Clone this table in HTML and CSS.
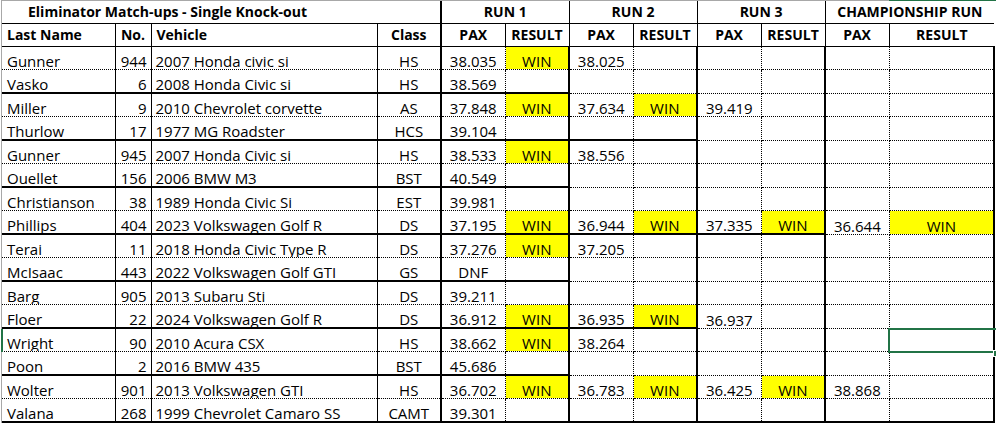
FILE: index.html
```html
<!DOCTYPE html>
<html lang="en">
<head>
<meta charset="utf-8">
<title>Eliminator Match-ups</title>
<link rel="stylesheet" href="styles.css">
</head>
<body>
<div class="sheet">
  <div class="frame">
    <table class="grid">
      <colgroup>
        <col class="w-name"><col class="w-no"><col class="w-veh"><col class="w-std">
        <col class="w-std"><col class="w-std"><col class="w-std"><col class="w-std">
        <col class="w-std"><col class="w-std"><col class="w-std"><col class="w-last">
      </colgroup>
      <tr class="h1">
        <td colspan="4" class="title">Eliminator Match-ups - Single Knock-out</td>
        <td colspan="2" class="run">RUN 1</td>
        <td colspan="2" class="run">RUN 2</td>
        <td colspan="2" class="run">RUN 3</td>
        <td colspan="2" class="run end">CHAMPIONSHIP RUN</td>
      </tr>
      <tr class="h2">
        <td class="left">Last Name</td><td>No.</td><td class="left">Vehicle</td><td>Class</td>
        <td>PAX</td><td>RESULT</td><td>PAX</td><td>RESULT</td><td>PAX</td><td>RESULT</td><td>PAX</td><td>RESULT</td>
      </tr>
      <tr class="d">
        <td>Gunner</td><td>944</td><td>2007 Honda civic si</td><td>HS</td><td>38.035</td><td class="win">WIN</td><td>38.025</td><td></td><td></td><td></td><td></td><td></td>
      </tr>
      <tr class="d p2">
        <td>Vasko</td><td>6</td><td>2008 Honda Civic si</td><td>HS</td><td>38.569</td><td></td><td></td><td></td><td></td><td></td><td></td><td></td>
      </tr>
      <tr class="d">
        <td>Miller</td><td>9</td><td>2010 Chevrolet corvette</td><td>AS</td><td>37.848</td><td class="win">WIN</td><td>37.634</td><td class="win">WIN</td><td>39.419</td><td></td><td></td><td></td>
      </tr>
      <tr class="d p4">
        <td>Thurlow</td><td>17</td><td>1977 MG Roadster</td><td>HCS</td><td>39.104</td><td></td><td></td><td></td><td></td><td></td><td></td><td></td>
      </tr>
      <tr class="d">
        <td>Gunner</td><td>945</td><td>2007 Honda Civic si</td><td>HS</td><td>38.533</td><td class="win">WIN</td><td>38.556</td><td></td><td></td><td></td><td></td><td></td>
      </tr>
      <tr class="d p2">
        <td>Ouellet</td><td>156</td><td>2006 BMW M3</td><td>BST</td><td>40.549</td><td></td><td></td><td></td><td></td><td></td><td></td><td></td>
      </tr>
      <tr class="d">
        <td>Christianson</td><td>38</td><td>1989 Honda Civic Si</td><td>EST</td><td>39.981</td><td></td><td></td><td></td><td></td><td></td><td></td><td></td>
      </tr>
      <tr class="d p8">
        <td>Phillips</td><td>404</td><td>2023 Volkswagen Golf R</td><td>DS</td><td>37.195</td><td class="win">WIN</td><td>36.944</td><td class="win">WIN</td><td>37.335</td><td class="win">WIN</td><td>36.644</td><td class="win">WIN</td>
      </tr>
      <tr class="d">
        <td>Terai</td><td>11</td><td>2018 Honda Civic Type R</td><td>DS</td><td>37.276</td><td class="win">WIN</td><td>37.205</td><td></td><td></td><td></td><td></td><td></td>
      </tr>
      <tr class="d p2">
        <td>McIsaac</td><td>443</td><td>2022 Volkswagen Golf GTI</td><td>GS</td><td>DNF</td><td></td><td></td><td></td><td></td><td></td><td></td><td></td>
      </tr>
      <tr class="d">
        <td>Barg</td><td>905</td><td>2013 Subaru Sti</td><td>DS</td><td>39.211</td><td></td><td></td><td></td><td></td><td></td><td></td><td></td>
      </tr>
      <tr class="d p4">
        <td>Floer</td><td>22</td><td>2024 Volkswagen Golf R</td><td>DS</td><td>36.912</td><td class="win">WIN</td><td>36.935</td><td class="win">WIN</td><td>36.937</td><td></td><td></td><td></td>
      </tr>
      <tr class="d">
        <td>Wright</td><td>90</td><td>2010 Acura CSX</td><td>HS</td><td>38.662</td><td class="win">WIN</td><td>38.264</td><td></td><td></td><td></td><td></td><td></td>
      </tr>
      <tr class="d p2">
        <td>Poon</td><td>2</td><td>2016 BMW 435</td><td>BST</td><td>45.686</td><td></td><td></td><td></td><td></td><td></td><td></td><td></td>
      </tr>
      <tr class="d">
        <td>Wolter</td><td>901</td><td>2013 Volkswagen GTI</td><td>HS</td><td>36.702</td><td class="win">WIN</td><td>36.783</td><td class="win">WIN</td><td>36.425</td><td class="win">WIN</td><td>38.868</td><td></td>
      </tr>
      <tr class="d p16">
        <td>Valana</td><td>268</td><td>1999 Chevrolet Camaro SS</td><td>CAMT</td><td>39.301</td><td></td><td></td><td></td><td></td><td></td><td></td><td></td>
      </tr>
    </table>
  </div>
  <div class="col-sel"></div>
  <div class="row-sel"></div>
  <div class="cell-sel"><span class="handle"></span></div>
</div>
</body>
</html>
```

FILE: styles.css
```css
html, body {
  margin: 0;
  padding: 0;
  background: #ffffff;
}

body {
  font-family: "Open Sans", "Liberation Sans", sans-serif;
  font-size: 15px;
  color: #000000;
}

.sheet {
  position: relative;
  width: 996px;
  height: 423px;
  overflow: hidden;
}

.frame {
  margin-left: 1px;
  border-left: 1px solid #a8a8a8;
  border-top: 1px solid #a8a8a8;
}

.grid {
  border-collapse: collapse;
  table-layout: fixed;
  width: 993px;
}

.w-name { width: 113px; }
.w-no { width: 36px; }
.w-veh { width: 226px; }
.w-std { width: 64px; }
.w-last { width: 105px; }

.grid td {
  padding: 0 4px;
  border: 0;
  white-space: nowrap;
  overflow: hidden;
  line-height: 18px;
  vertical-align: bottom;
  text-align: center;
}

/* header row 1 */
.h1 td {
  height: 20px;
  padding-bottom: 2px;
  font-size: 14px;
  font-weight: 700;
  border-bottom: 1px solid #000;
}
.h1 .title {
  text-align: left;
  padding-left: 26px;
  border-right: 2px solid #000;
}
.h1 .run {
  border-right: 1px solid #000;
}
.h1 .end {
  border-right: 0;
}

/* header row 2 */
.h2 td {
  height: 20px;
  padding-bottom: 2px;
  font-size: 14px;
  font-weight: 700;
  border-bottom: 1px solid #000;
  border-right: 1px solid #000;
}
.h2 td.left {
  text-align: left;
  padding-left: 5px;
}
.h2 td:nth-child(4) {
  border-right: 2px solid #000;
}
.h2 td:last-child {
  border-right: 0;
}

/* data rows */
.d td {
  height: 22px;
  line-height: 16px;
  border-bottom: 1px dotted #000;
  border-right: 1px dotted #000;
}
.d td:nth-child(1) {
  text-align: left;
  padding-left: 5px;
  border-right: 1px solid #000;
}
.d td:nth-child(2) {
  text-align: right;
  padding-right: 4px;
  border-right: 1px solid #000;
}
.d td:nth-child(3) {
  text-align: left;
  padding-left: 4px;
  border-right: 1px solid #000;
}
.d td:nth-child(4),
.d td:nth-child(6),
.d td:nth-child(8),
.d td:nth-child(10),
.d td:nth-child(12) {
  border-right: 2px solid #000;
}
.d.p2 td:nth-child(-n+6),
.d.p4 td:nth-child(-n+8),
.d.p8 td:nth-child(-n+10),
.d.p16 td {
  border-bottom: 2px solid #000;
}

.d td.win {
  background: #ffff00;
}

/* Excel selection overlays */
.col-sel {
  position: absolute;
  left: 889px;
  top: 0;
  width: 107px;
  height: 1px;
  background: #217346;
}
.row-sel {
  position: absolute;
  left: 1px;
  top: 329px;
  width: 2px;
  height: 23px;
  background: #217346;
}
.cell-sel {
  position: absolute;
  left: 888px;
  top: 328px;
  width: 112px;
  height: 25px;
  box-sizing: border-box;
  border: 2px solid #217346;
}
.handle {
  position: absolute;
  left: 103px;
  top: 20px;
  width: 5px;
  height: 5px;
  background: #217346;
  border: 1px solid #ffffff;
}
```
